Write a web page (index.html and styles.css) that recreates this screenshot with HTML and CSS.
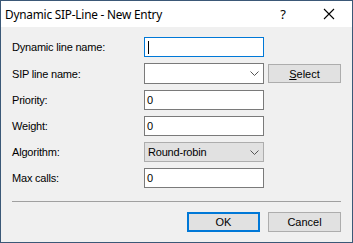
FILE: index.html
```html
<!DOCTYPE html>
<html lang="en">
<head>
    <meta charset="UTF-8">
    <title>Dynamic SIP-Line - New Entry</title>
    <link rel="stylesheet" href="styles.css">
</head>
<body>
<div class="window">
    <div class="titlebar">
        <span class="title">Dynamic SIP-Line - New Entry</span>
        <span class="help">?</span>
        <span class="close">
            <svg width="12" height="12" viewBox="0 0 12 12"><path d="M1 1 L11 11 M11 1 L1 11" stroke="#000" stroke-width="1.1"/></svg>
        </span>
    </div>

    <div class="content">
        <div class="form">
            <label>Dynamic line name:</label>
            <div class="field"><div class="input focused"><span class="caret"></span></div></div>

            <label>SIP line name:</label>
            <div class="field">
                <div class="input combo"><span></span><svg class="arrow" width="9" height="5" viewBox="0 0 9 5"><polyline points="0.5,0.5 4.5,4.5 8.5,0.5" fill="none" stroke="#555" stroke-width="1"/></svg></div>
                <button class="btn"><u>S</u>elect</button>
            </div>

            <label>Priority:</label>
            <div class="field"><div class="input">0</div></div>

            <label>Weight:</label>
            <div class="field"><div class="input">0</div></div>

            <label>Algorithm:</label>
            <div class="field">
                <div class="input dropdown"><span>Round-robin</span><svg class="arrow" width="9" height="5" viewBox="0 0 9 5"><polyline points="0.5,0.5 4.5,4.5 8.5,0.5" fill="none" stroke="#555" stroke-width="1"/></svg></div>
            </div>

            <label>Max calls:</label>
            <div class="field"><div class="input">0</div></div>
        </div>

        <div class="separator"></div>

        <div class="buttons">
            <button class="btn default">OK</button>
            <button class="btn">Cancel</button>
        </div>
    </div>
</div>
</body>
</html>
```

FILE: styles.css
```css
body {
    margin: 0;
    font-family: "Liberation Sans", Arial, sans-serif;
    font-size: 11px;
    color: #000;
}

.window {
    width: 351px;
    height: 241px;
    border: 1px solid #3b5877;
    background-color: #f0f0f0;
    display: flex;
    flex-direction: column;
}

.titlebar {
    height: 26px;
    background-color: #fff;
    display: flex;
    align-items: center;
    padding-left: 4px;
}

.title {
    flex-grow: 1;
    font-family: "Noto Sans", sans-serif;
    font-size: 11.8px;
    letter-spacing: -0.2px;
}

.help {
    width: 46px;
    text-align: center;
    font-family: "Noto Sans", sans-serif;
    font-size: 13px;
}

.close {
    width: 46px;
    display: flex;
    justify-content: center;
}

.content {
    padding: 10px 11px 0 11px;
}

.form {
    display: grid;
    grid-template-columns: 132px 1fr;
    row-gap: 6px;
}

.form label {
    display: flex;
    align-items: center;
    letter-spacing: -0.2px;
}

.field {
    display: flex;
    gap: 4px;
    align-items: center;
}

.input {
    box-sizing: border-box;
    width: 120px;
    height: 20px;
    border: 1px solid #7a7a7a;
    background-color: #fff;
    display: flex;
    align-items: center;
    padding-left: 2px;
}

.input.focused {
    border-color: #0078d7;
}

.caret {
    width: 1px;
    height: 13px;
    background-color: #000;
    margin-left: 1px;
}

.input.combo,
.input.dropdown {
    justify-content: space-between;
    padding-right: 4px;
}

.input.combo {
    height: 21px;
}

.input.dropdown {
    background-color: #e1e1e1;
    border-color: #adadad;
    padding-left: 3px;
    letter-spacing: -0.2px;
}

.btn {
    box-sizing: border-box;
    width: 73px;
    height: 19px;
    padding: 0;
    background-color: #e1e1e1;
    border: 1px solid #adadad;
    font-family: "Liberation Sans", Arial, sans-serif;
    font-size: 11px;
    color: #000;
}

.separator {
    height: 1px;
    background-color: #a0a0a0;
    margin-top: 13px;
}

.buttons {
    display: flex;
    justify-content: flex-end;
    gap: 8px;
    margin-top: 10px;
}

.buttons .btn {
    height: 20px;
}

.btn.default {
    border: 2px solid #0078d7;
}
```
